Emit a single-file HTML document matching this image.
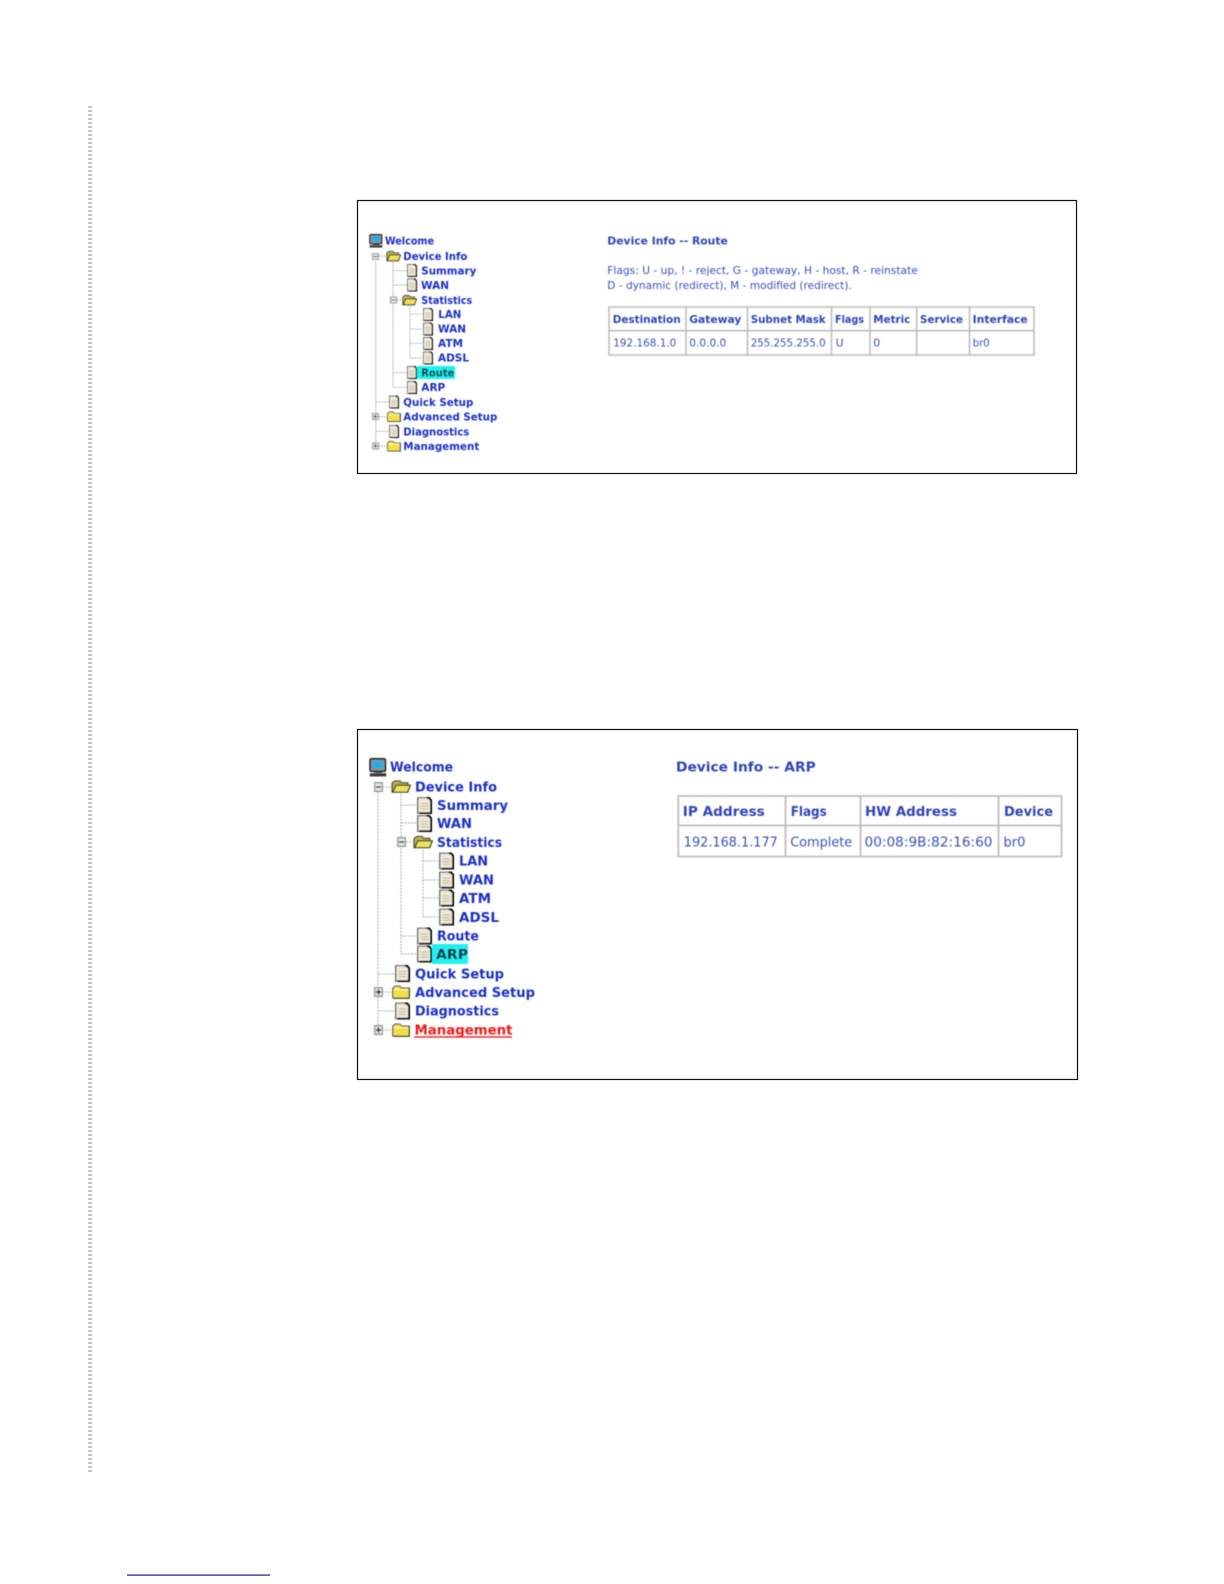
<!DOCTYPE html>
<html><head><meta charset="utf-8"><title>Device Info</title>
<style>
html,body{margin:0;padding:0;background:#fff;width:1224px;height:1584px;overflow:hidden}
svg{display:block;position:absolute;left:0;top:0}
.t{font-family:"DejaVu Sans","Liberation Sans",sans-serif;font-weight:bold;fill:#1a2ec6}
.r{font-family:"DejaVu Sans","Liberation Sans",sans-serif;fill:#3a50bb}
.h{font-family:"DejaVu Sans","Liberation Sans",sans-serif;font-weight:bold;fill:#2f45b8}
.s{font-size:10.5px}.b{font-size:13.5px}
</style></head><body>
<svg width="1224" height="1584" viewBox="0 0 1224 1584" xmlns="http://www.w3.org/2000/svg">
<defs>
<filter id="bl" x="-2%" y="-2%" width="104%" height="104%"><feGaussianBlur stdDeviation="0.45"/></filter>
<symbol id="doc" viewBox="0 0 10 13" preserveAspectRatio="none"><path d="M.5.5H7.2L9.5 2.8V12.5H.5Z" fill="#efe9d8" stroke="#666" stroke-width=".9"/><path d="M6.5.6H8L9.4 2.5V12.4H1.5" fill="none" stroke="#000" stroke-width="1.4"/><path d="M2.5 5H7.5M2.5 7H7.5M2.5 9H7.5" stroke="#bdb596" stroke-width=".8"/></symbol>
<symbol id="fo" viewBox="0 0 15 11" preserveAspectRatio="none"><path d="M.8 10.2V2.5L2.8.8H6.8L8 2.4H12.6V10.2Z" fill="#b8ae4c" stroke="#444" stroke-width=".9"/><path d="M1.3 10.2L3.8 4.5H14.5L12.5 10.2Z" fill="#efe25a" stroke="#333" stroke-width="1"/></symbol>
<symbol id="fc" viewBox="0 0 14 11" preserveAspectRatio="none"><path d="M.6 10.4V2.5L2.4.8H6L7.5 2.4H13.4V10.4Z" fill="#f0e04a" stroke="#555" stroke-width=".9"/><path d="M1.5 3.6H12.5" stroke="#fff6a8" stroke-width="1"/><path d="M13.3 2.6V10.4H1.5" fill="none" stroke="#333" stroke-width=".9"/></symbol>
<symbol id="mon" viewBox="0 0 14 14" preserveAspectRatio="none"><rect x=".8" y=".6" width="12" height="9.2" rx="1" fill="#8b9097" stroke="#222" stroke-width="1.2"/><rect x="3" y="2.2" width="7.8" height="5.4" fill="#24aeea"/><path d="M4 10H10V11H4Z" fill="#444"/><path d="M.6 11.2H13.4V13.6H.6Z" fill="#3a3a3a"/></symbol>
<symbol id="mi" viewBox="0 0 7 7" preserveAspectRatio="none"><rect x=".5" y=".5" width="6" height="6" fill="#e6e6e6" stroke="#999"/><path d="M1.5 3.5H5.5" stroke="#333"/></symbol>
<symbol id="pl" viewBox="0 0 7 7" preserveAspectRatio="none"><rect x=".5" y=".5" width="6" height="6" fill="#e6e6e6" stroke="#999"/><path d="M1.5 3.5H5.5M3.5 1.5V5.5" stroke="#222"/></symbol>
</defs>

<!-- margin dotted rule -->
<line x1="90" y1="106" x2="90" y2="1473" stroke="#c6c6c6" stroke-width="4" stroke-dasharray="2 2"/>
<!-- bottom rule -->
<rect x="127" y="1574.5" width="143" height="1.2" fill="#1a1a8c"/>
<!-- frames -->
<rect x="357.5" y="200.5" width="719" height="273" fill="#fff" stroke="#111" stroke-width="1.2"/>
<rect x="357.5" y="729.5" width="720" height="350" fill="#fff" stroke="#111" stroke-width="1.2"/>

<g filter="url(#bl)">
<!-- Tree 1 -->
<rect x="417" y="366" width="38" height="13" fill="#22f0f0"/>
<path d="M375.7 262V446M376 402H389M376 431.3H389M379 416.7H387M379 446H387M379 256H386M393 262V387.3M393 270.7H407M393 285H407M393 372.7H407M393 387.3H407M397 300H402M410 306V358M410 314.3H422M410 329H422M410 343.3H422M410 358H422" fill="none" stroke="#a8a8a8" stroke-width="1" stroke-dasharray="1.5 1"/>
<use href="#mon" x="369" y="234" width="14" height="14"/>
<use href="#mi" x="372" y="253" width="7" height="7"/>
<use href="#fo" x="386" y="250.5" width="15" height="11"/>
<use href="#doc" x="407" y="264" width="10" height="13"/>
<use href="#doc" x="407" y="278.5" width="10" height="13"/>
<use href="#mi" x="390" y="296.5" width="7" height="7"/>
<use href="#fo" x="402" y="294.5" width="15" height="11"/>
<use href="#doc" x="423" y="308" width="10" height="13"/>
<use href="#doc" x="423" y="322.5" width="10" height="13"/>
<use href="#doc" x="423" y="337" width="10" height="13"/>
<use href="#doc" x="423" y="351.5" width="10" height="13"/>
<use href="#doc" x="407" y="366" width="10" height="13"/>
<use href="#doc" x="407" y="381" width="10" height="13"/>
<use href="#doc" x="389" y="395.5" width="10" height="13"/>
<use href="#pl" x="372" y="413" width="7" height="7"/>
<use href="#fc" x="387" y="411" width="14" height="11"/>
<use href="#doc" x="389" y="425" width="10" height="13"/>
<use href="#pl" x="372" y="442.5" width="7" height="7"/>
<use href="#fc" x="387" y="440.5" width="14" height="11"/>
<g class="t s">
<text x="385" y="244.5" textLength="49" lengthAdjust="spacingAndGlyphs">Welcome</text>
<text x="403.3" y="260" textLength="64" lengthAdjust="spacingAndGlyphs">Device Info</text>
<text x="421.3" y="274.5" textLength="55" lengthAdjust="spacingAndGlyphs">Summary</text>
<text x="421" y="289" textLength="28" lengthAdjust="spacingAndGlyphs">WAN</text>
<text x="421.3" y="304" textLength="51" lengthAdjust="spacingAndGlyphs">Statistics</text>
<text x="438.3" y="318" textLength="23" lengthAdjust="spacingAndGlyphs">LAN</text>
<text x="438" y="332.7" textLength="28" lengthAdjust="spacingAndGlyphs">WAN</text>
<text x="438" y="347" textLength="25" lengthAdjust="spacingAndGlyphs">ATM</text>
<text x="438" y="361.7" textLength="31" lengthAdjust="spacingAndGlyphs">ADSL</text>
<text x="421.3" y="376.5" textLength="33" lengthAdjust="spacingAndGlyphs" style="fill:#04202e">Route</text>
<text x="421.3" y="391" textLength="24" lengthAdjust="spacingAndGlyphs">ARP</text>
<text x="403.3" y="406" textLength="70" lengthAdjust="spacingAndGlyphs">Quick Setup</text>
<text x="403.3" y="420.7" textLength="94" lengthAdjust="spacingAndGlyphs">Advanced Setup</text>
<text x="403.3" y="435.3" textLength="66" lengthAdjust="spacingAndGlyphs">Diagnostics</text>
<text x="403.3" y="450" textLength="76" lengthAdjust="spacingAndGlyphs">Management</text>
</g>

<!-- Route panel -->
<text class="h s" x="607.3" y="244.7" textLength="120.5" lengthAdjust="spacingAndGlyphs">Device Info -- Route</text>
<text class="r s" x="607.3" y="274" textLength="310.5" lengthAdjust="spacingAndGlyphs">Flags: U - up, ! - reject, G - gateway, H - host, R - reinstate</text>
<text class="r s" x="607.3" y="289" textLength="244.5" lengthAdjust="spacingAndGlyphs">D - dynamic (redirect), M - modified (redirect).</text>
<path d="M609 307H1034V355H609ZM609 330.7H1034M686 307V355M747.5 307V355M831.5 307V355M870 307V355M916.7 307V355M969.5 307V355" fill="none" stroke="#bdbdbd" stroke-width="1.6"/>
<g class="h s">
<text x="612.7" y="323" textLength="68" lengthAdjust="spacingAndGlyphs">Destination</text>
<text x="689.3" y="323" textLength="52" lengthAdjust="spacingAndGlyphs">Gateway</text>
<text x="750.7" y="323" textLength="75" lengthAdjust="spacingAndGlyphs">Subnet Mask</text>
<text x="835" y="323" textLength="29" lengthAdjust="spacingAndGlyphs">Flags</text>
<text x="873.3" y="323" textLength="37" lengthAdjust="spacingAndGlyphs">Metric</text>
<text x="920" y="323" textLength="43" lengthAdjust="spacingAndGlyphs">Service</text>
<text x="972.7" y="323" textLength="55" lengthAdjust="spacingAndGlyphs">Interface</text>
</g>
<g class="r s">
<text x="613.3" y="346.7" textLength="63" lengthAdjust="spacingAndGlyphs">192.168.1.0</text>
<text x="689.3" y="346.7" textLength="37" lengthAdjust="spacingAndGlyphs">0.0.0.0</text>
<text x="750.7" y="346.7" textLength="75" lengthAdjust="spacingAndGlyphs">255.255.255.0</text>
<text x="835.7" y="346.7" textLength="8" lengthAdjust="spacingAndGlyphs">U</text>
<text x="873.3" y="346.7" textLength="7" lengthAdjust="spacingAndGlyphs">0</text>
<text x="972.7" y="346.7" textLength="17" lengthAdjust="spacingAndGlyphs">br0</text>
</g>

<!-- Tree 2 -->
<rect x="432" y="944" width="36" height="20" fill="#22f0f0"/>
<path d="M378 792V1030M378 973.7H395M378 1011H395M382 992H392M382 1030H392M382 787H391M401 792V954M401 805H417M401 823H417M401 936H417M401 954H417M406 842H413M423 850V917M423 861H439M423 880H439M423 898H439M423 917H439" fill="none" stroke="#a8a8a8" stroke-width="1" stroke-dasharray="2 1.3"/>
<use href="#mon" x="369" y="758" width="18" height="19"/>
<use href="#mi" x="374" y="782" width="9" height="10"/>
<use href="#fo" x="391" y="780" width="20" height="13"/>
<use href="#doc" x="417" y="797" width="15" height="17"/>
<use href="#doc" x="417" y="815" width="15" height="17"/>
<use href="#mi" x="397" y="837" width="9" height="10"/>
<use href="#fo" x="413" y="835.5" width="20" height="13"/>
<use href="#doc" x="439" y="852.5" width="15" height="17"/>
<use href="#doc" x="439" y="871.5" width="15" height="17"/>
<use href="#doc" x="439" y="889.5" width="15" height="17"/>
<use href="#doc" x="439" y="908.5" width="15" height="17"/>
<use href="#doc" x="417" y="927.5" width="15" height="17"/>
<use href="#doc" x="417" y="945.5" width="15" height="17"/>
<use href="#doc" x="395" y="965" width="15" height="17"/>
<use href="#pl" x="374" y="987" width="9" height="10"/>
<use href="#fc" x="392" y="985" width="18" height="14"/>
<use href="#doc" x="395" y="1002.5" width="15" height="17"/>
<use href="#pl" x="374" y="1025" width="9" height="10"/>
<use href="#fc" x="392" y="1023" width="18" height="14"/>
<g class="t b">
<text x="390" y="771.5" textLength="63" lengthAdjust="spacingAndGlyphs">Welcome</text>
<text x="415" y="791.5" textLength="82" lengthAdjust="spacingAndGlyphs">Device Info</text>
<text x="437" y="810" textLength="71" lengthAdjust="spacingAndGlyphs">Summary</text>
<text x="437" y="828" textLength="35" lengthAdjust="spacingAndGlyphs">WAN</text>
<text x="437" y="847" textLength="65" lengthAdjust="spacingAndGlyphs">Statistics</text>
<text x="459" y="865.7" textLength="29" lengthAdjust="spacingAndGlyphs">LAN</text>
<text x="459" y="884.5" textLength="35" lengthAdjust="spacingAndGlyphs">WAN</text>
<text x="459" y="903" textLength="32" lengthAdjust="spacingAndGlyphs">ATM</text>
<text x="459" y="922" textLength="40" lengthAdjust="spacingAndGlyphs">ADSL</text>
<text x="437" y="940.7" textLength="42" lengthAdjust="spacingAndGlyphs">Route</text>
<text x="436" y="959" textLength="32" lengthAdjust="spacingAndGlyphs" style="fill:#04202e">ARP</text>
<text x="415" y="978.5" textLength="89" lengthAdjust="spacingAndGlyphs">Quick Setup</text>
<text x="415" y="997" textLength="120" lengthAdjust="spacingAndGlyphs">Advanced Setup</text>
<text x="415" y="1015.7" textLength="84" lengthAdjust="spacingAndGlyphs">Diagnostics</text>
<text x="414.5" y="1034.5" textLength="98" lengthAdjust="spacingAndGlyphs" style="fill:#f01818">Management</text>
</g>
<rect x="414" y="1036.3" width="98" height="1.3" fill="#f01818"/>

<!-- ARP panel -->
<text class="h b" x="676" y="771.5" textLength="139.7" lengthAdjust="spacingAndGlyphs">Device Info -- ARP</text>
<path d="M678.3 796H1061.5V856.5H678.3ZM678.3 825.5H1061.5M785.5 796V856.5M860.5 796V856.5M998.5 796V856.5" fill="none" stroke="#bdbdbd" stroke-width="1.8"/>
<g class="h b">
<text x="682.8" y="816" textLength="82" lengthAdjust="spacingAndGlyphs">IP Address</text>
<text x="790.7" y="816" textLength="36" lengthAdjust="spacingAndGlyphs">Flags</text>
<text x="865" y="816" textLength="92" lengthAdjust="spacingAndGlyphs">HW Address</text>
<text x="1004" y="816" textLength="49" lengthAdjust="spacingAndGlyphs">Device</text>
</g>
<g class="r b">
<text x="683.8" y="846.7" textLength="94" lengthAdjust="spacingAndGlyphs">192.168.1.177</text>
<text x="790.2" y="846.7" textLength="62" lengthAdjust="spacingAndGlyphs">Complete</text>
<text x="864.5" y="846.7" textLength="128" lengthAdjust="spacingAndGlyphs">00:08:9B:82:16:60</text>
<text x="1003.5" y="846.7" textLength="22" lengthAdjust="spacingAndGlyphs">br0</text>
</g>
</g>
</svg>
</body></html>
